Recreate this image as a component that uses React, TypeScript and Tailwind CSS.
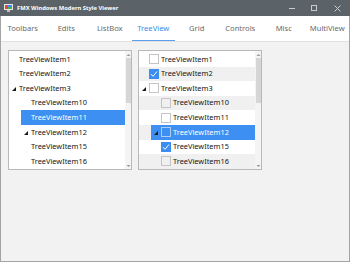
const font = { fontFamily: '"Noto Sans", "Open Sans", sans-serif' };

type Row = { label: string; level: number; expanded?: boolean; checked?: boolean; selected?: boolean };

const leftRows: Row[] = [
  { label: "TreeViewItem1", level: 0 },
  { label: "TreeViewItem2", level: 0 },
  { label: "TreeViewItem3", level: 0, expanded: true },
  { label: "TreeViewItem10", level: 1 },
  { label: "TreeViewItem11", level: 1, selected: true },
  { label: "TreeViewItem12", level: 1, expanded: true },
  { label: "TreeViewItem15", level: 1 },
  { label: "TreeViewItem16", level: 1 },
];

const rightRows: Row[] = [
  { label: "TreeViewItem1", level: 0 },
  { label: "TreeViewItem2", level: 0, checked: true },
  { label: "TreeViewItem3", level: 0, expanded: true },
  { label: "TreeViewItem10", level: 1 },
  { label: "TreeViewItem11", level: 1 },
  { label: "TreeViewItem12", level: 1, expanded: true, selected: true },
  { label: "TreeViewItem15", level: 1, checked: true },
  { label: "TreeViewItem16", level: 1 },
];

const tabs = ["Toolbars", "Edits", "ListBox", "TreeView", "Grid", "Controls", "Misc", "MultiView"];

function Arrow() {
  return (
    <svg width="4" height="4" viewBox="0 0 4 4">
      <polygon points="4,0 4,4 0,4" fill="#1a1a1a" />
    </svg>
  );
}

function Check({ checked, onBlue }: { checked?: boolean; onBlue?: boolean }) {
  if (checked) {
    return (
      <div className="flex h-[10px] w-[10px] shrink-0 items-center justify-center bg-[#3b8ef0]">
        <svg width="8" height="8" viewBox="0 0 8 8">
          <polyline points="1,4.2 3,6.3 7,1.5" fill="none" stroke="white" strokeWidth="1" />
        </svg>
      </div>
    );
  }
  return (
    <div
      className={
        onBlue
          ? "h-[10px] w-[10px] shrink-0 border border-[#a9cdf8]"
          : "h-[10px] w-[10px] shrink-0 border border-[#c4c4c4]"
      }
    />
  );
}

function ScrollBar() {
  return (
    <div className="flex w-[6px] shrink-0 flex-col items-center bg-[#f4f4f4]">
      <svg width="5" height="4" viewBox="0 0 5 4" className="mt-[2px]">
        <polygon points="2.5,1 4.5,3 0.5,3" fill="#9a9a9a" />
      </svg>
      <div className="mt-[1px] h-[45px] w-[5px] bg-[#d6d6d6]" />
      <div className="flex-1" />
      <svg width="5" height="4" viewBox="0 0 5 4" className="mb-[1px]">
        <polygon points="0.5,1 4.5,1 2.5,3" fill="#9a9a9a" />
      </svg>
    </div>
  );
}

function TreeRow({ row, withCheck, stripe }: { row: Row; withCheck?: boolean; stripe?: boolean }) {
  return (
    <div className={stripe ? "flex h-[14.6px] bg-[#f0f0f0]" : "flex h-[14.6px]"}>
      <div className={row.level === 1 ? "w-[12px] shrink-0" : "w-0 shrink-0"} />
      <div
        className={
          row.selected
            ? "flex flex-1 items-center bg-[#3d8ff2] text-white"
            : "flex flex-1 items-center text-[#161616]"
        }
      >
        <div className="flex w-[10px] shrink-0 items-center justify-center pt-[1px]">
          {row.expanded && <Arrow />}
        </div>
        {withCheck && (
          <div className="mr-[2px]">
            <Check checked={row.checked} onBlue={row.selected} />
          </div>
        )}
        <span className="text-[7.4px] leading-none">{row.label}</span>
      </div>
    </div>
  );
}

function Tree({ rows, withCheck }: { rows: Row[]; withCheck?: boolean }) {
  return (
    <div className="flex h-[120px] w-[124px] border border-[#b9b9b9] bg-white">
      <div className="flex-1 overflow-hidden pt-[1px]">
        {rows.map((r, i) => (
          <TreeRow key={r.label} row={r} withCheck={withCheck} stripe={withCheck && i % 2 === 1} />
        ))}
      </div>
      <ScrollBar />
    </div>
  );
}

export default function App() {
  return (
    <div className="h-[265px] w-[350px] bg-white" style={font}>
      <div className="flex h-[262px] w-[350px] flex-col border-x border-b border-[#a4a4a4]">
        <div className="-mx-px flex h-[16px] shrink-0 items-center bg-[#5b6268]">
          <svg width="9" height="8" viewBox="0 0 9 8" className="ml-[4px]">
            <rect x="0" y="0" width="9" height="6" fill="#e8e8e8" />
            <rect x="1" y="1" width="3" height="4" fill="#e2453c" />
            <rect x="4" y="1" width="4" height="2" fill="#3b8ef0" />
            <rect x="4" y="3" width="4" height="2" fill="#4caf50" />
            <rect x="3" y="6" width="3" height="2" fill="#bdbdbd" />
          </svg>
          <span className="ml-[4px] text-[5.8px] font-bold text-white">FMX Windows Modern Style Viewer</span>
          <div className="flex-1" />
          <div className="flex items-center">
            <div className="mr-[16px] h-px w-[6px] bg-[#c9cbcd]" />
            <div className="mr-[17px] h-[6px] w-[6px] border border-[#c9cbcd]" />
            <svg width="7" height="7" viewBox="0 0 7 7" className="mr-[9px]">
              <path d="M0.5 0.5 L6.5 6.5 M6.5 0.5 L0.5 6.5" stroke="#c9cbcd" strokeWidth="1" />
            </svg>
          </div>
        </div>
        <div className="grid h-[26px] shrink-0 grid-cols-8 border-b border-[#e0e0e0] bg-white">
          {tabs.map((t) => (
            <div key={t} className="relative flex items-center justify-center">
              <span
                className={
                  t === "TreeView" ? "text-[7.6px] text-[#3b8ee8]" : "text-[7.6px] text-[#6a6a6a]"
                }
              >
                {t}
              </span>
              {t === "TreeView" && (
                <div className="absolute bottom-0 left-0 right-0 h-[1.5px] bg-[#5aa0ee]" />
              )}
            </div>
          ))}
        </div>
        <div className="flex flex-1 gap-[6px] bg-[#f2f2f2] pl-[7px] pt-[8px]">
          <Tree rows={leftRows} />
          <Tree rows={rightRows} withCheck />
        </div>
      </div>
    </div>
  );
}
